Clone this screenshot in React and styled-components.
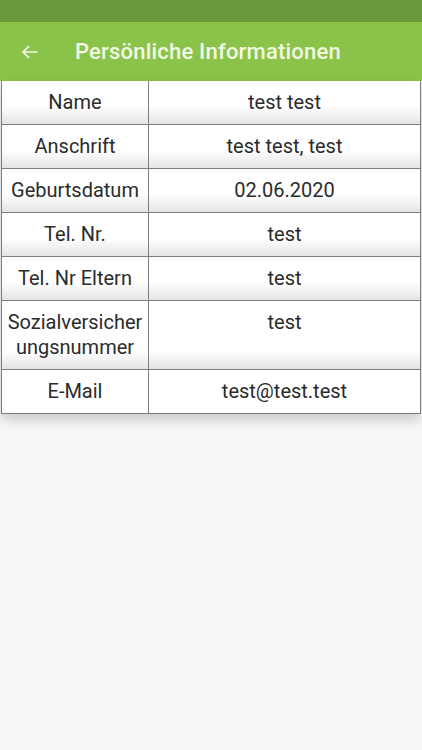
import React from 'react';
import styled, { createGlobalStyle } from 'styled-components';

const GlobalStyle = createGlobalStyle`
html, body {
  margin: 0;
  padding: 0;
  background: #f7f7f7;
  font-family: Roboto, "Liberation Sans", sans-serif;
}
`;

const rows = [
  ['Name', 'test test'],
  ['Anschrift', 'test test, test'],
  ['Geburtsdatum', '02.06.2020'],
  ['Tel. Nr.', 'test'],
  ['Tel. Nr Eltern', 'test'],
  ['Sozialversicherungsnummer', 'test'],
  ['E-Mail', 'test@test.test'],
];

const Page = styled.div`
min-height: 750px;
background: #f7f7f7;
`;
const StatusBar = styled.div`
height: 22px;
background: #6a983a;
`;
const AppBar = styled.div`
height: 59px;
background: #8bc34a;
display: flex;
align-items: center;
padding-left: 19px;
gap: 34px;
`;
const BackIcon = styled.svg`
width: 22px;
height: 22px;
flex-shrink: 0;
`;
const Title = styled.div`
color: #f1f8e4;
font-size: 22px;
font-weight: 500;
letter-spacing: 0.2px;
`;
const Table = styled.div`
margin: 0 1px;
border-left: 1px solid #7d7d7d;
border-right: 1px solid #7d7d7d;
box-shadow: 0 6px 12px rgba(0, 0, 0, 0.18);
`;
const Row = styled.div`
display: grid;
grid-template-columns: 146px 1fr;
border-bottom: 1px solid #7d7d7d;
background: ${props => (props.last
    ? '#fff'
    : 'linear-gradient(to bottom, #fff 0, #fff calc(100% - 18px), #e4e4e4 100%)')};
`;
const Cell = styled.div`
padding: 9px 3px;
font-size: 20px;
line-height: 25px;
color: #2b2b2b;
text-align: center;
overflow-wrap: anywhere;
border-left: ${props => (props.divider ? '1px solid #7d7d7d' : 'none')};
`;

const App = () => (
  <Page>
    <GlobalStyle />
    <StatusBar />
    <AppBar>
      <BackIcon viewBox="0 0 24 24">
        <path d="M20 12H4.5M11 5.5L4.5 12l6.5 6.5" fill="none" stroke="#f1f8e4" strokeWidth="1.9" />
      </BackIcon>
      <Title>Persönliche Informationen</Title>
    </AppBar>
    <Table>
      {rows.map(([label, value], i) => (
        <Row key={label} last={i === rows.length - 1}>
          <Cell>{label}</Cell>
          <Cell divider>{value}</Cell>
        </Row>
      ))}
    </Table>
  </Page>
);

export default App;
